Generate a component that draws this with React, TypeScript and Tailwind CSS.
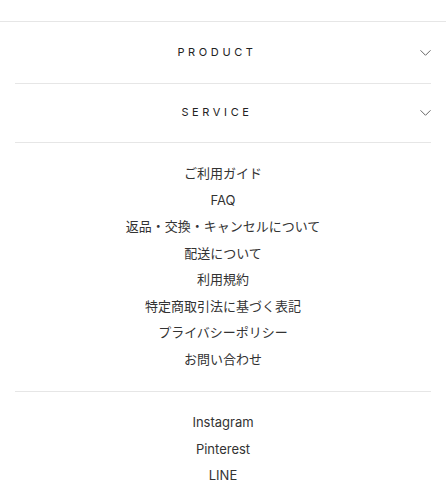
import React from "react";

const font = { fontFamily: '"Inter", "Noto Sans CJK JP", sans-serif' };

const Chevron = () => (
  <svg
    className="absolute right-0 top-1/2 -translate-y-1/2 h-[7px] w-[11px] text-[#666]"
    viewBox="0 0 11 7"
    fill="none"
    stroke="currentColor"
    strokeWidth="1"
  >
    <path d="M0.5 0.8l5 5 5-5" />
  </svg>
);

const guideLinks = [
  "ご利用ガイド",
  "FAQ",
  "返品・交換・キャンセルについて",
  "配送について",
  "利用規約",
  "特定商取引法に基づく表記",
  "プライバシーポリシー",
  "お問い合わせ",
];

const snsLinks = ["Instagram", "Pinterest", "LINE"];

const App = () => {
  return (
    <div className="min-h-[495px] w-full bg-white text-[#222]" style={font}>
      <div className="h-[22px] border-b border-[#e6e6e6]" />
      <div className="mx-[15px]">
        <div className="relative flex h-[62px] items-center justify-center border-b border-[#e6e6e6] pb-[1px] pr-[12px]">
          <span className="text-[11px] tracking-[0.33em]">PRODUCT</span>
          <Chevron />
        </div>
        <div className="relative flex h-[59px] items-center justify-center border-b border-[#e6e6e6] pb-[2px] pr-[12px]">
          <span className="text-[11px] tracking-[0.33em]">SERVICE</span>
          <Chevron />
        </div>
        <ul className="flex flex-col items-center border-b border-[#e6e6e6] pb-[19px] pt-[17px] text-[13px] text-[#333]">
          {guideLinks.map((l) => (
            <li key={l} className="h-[26.5px] leading-[26.5px]">
              {l}
            </li>
          ))}
        </ul>
        <ul className="flex flex-col items-center pt-[17px] text-[13px] text-[#333]">
          {snsLinks.map((l) => (
            <li key={l} className="h-[26.5px] leading-[26.5px]">
              {l}
            </li>
          ))}
        </ul>
      </div>
    </div>
  );
};

export default App;
